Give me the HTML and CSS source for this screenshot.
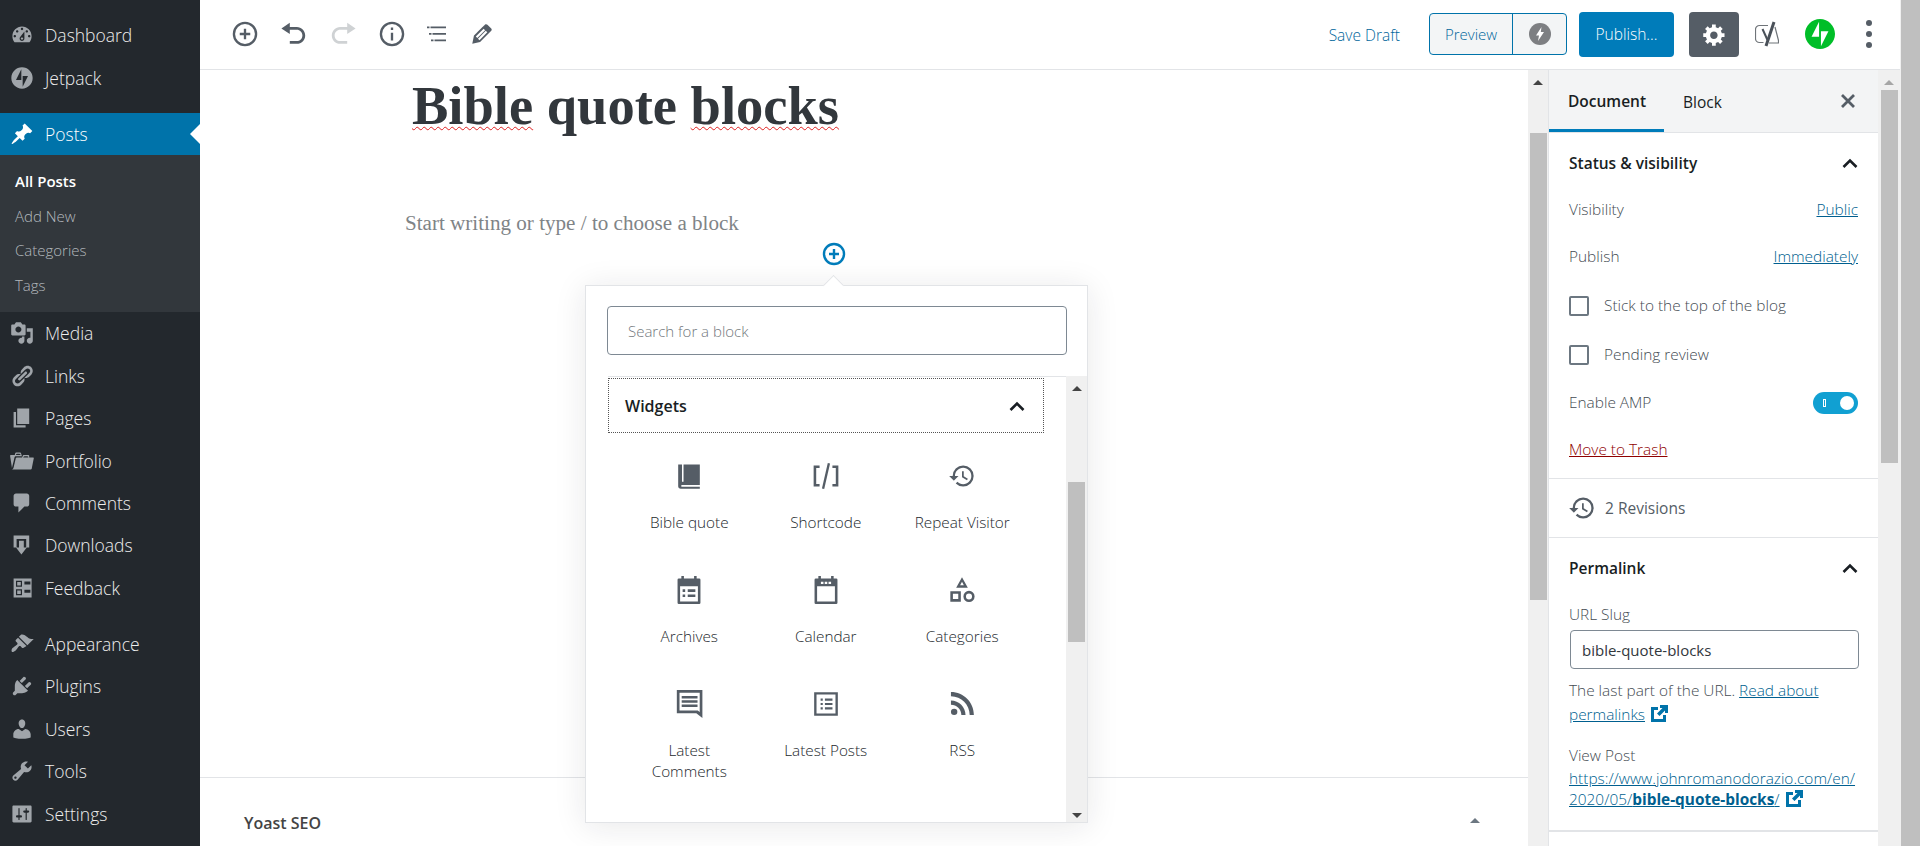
FILE: index.html
```html
<!DOCTYPE html>
<html lang="en">
<head>
    <meta charset="UTF-8">
    <title>Edit Post</title>
    <link rel="stylesheet" href="styles.css">
</head>
<body>
<div class="page">
    <nav class="menu">
        <ul class="menu-list">
            <li class="menu-item"><svg class="menu-icon" viewBox="0 0 20 20"><path fill-rule="evenodd" d="M3.76 16h12.48c1.1-1.37 1.76-3.11 1.76-5 0-4.42-3.58-8-8-8s-8 3.58-8 8c0 1.89.66 3.63 1.76 5zM10 4c.55 0 1 .45 1 1s-.45 1-1 1-1-.45-1-1 .45-1 1-1zM6 6c.55 0 1 .45 1 1s-.45 1-1 1-1-.45-1-1 .45-1 1-1zm8 0c.55 0 1 .45 1 1s-.45 1-1 1-1-.45-1-1 .45-1 1-1zm-5.37 5.55L12 7v6c0 1.1-.9 2-2 2s-2-.9-2-2c0-.57.24-1.08.63-1.45zM4 10c.55 0 1 .45 1 1s-.45 1-1 1-1-.45-1-1 .45-1 1-1zm12 0c.55 0 1 .45 1 1s-.45 1-1 1-1-.45-1-1 .45-1 1-1zm-5 3c0-.55-.45-1-1-1s-1 .45-1 1 .45 1 1 1 1-.45 1-1z"/></svg>Dashboard</li>
            <li class="menu-item"><svg class="menu-icon" viewBox="-2 -2 36 36"><path d="M16 0C7.2 0 0 7.2 0 16s7.2 16 16 16 16-7.2 16-16S24.8 0 16 0zM15 19H7l8-16v16zm2 10V13h8l-8 16z"/></svg>Jetpack</li>
            <li class="menu-sep"></li>
            <li class="menu-item menu-item-active"><svg class="menu-icon" viewBox="0 0 20 20"><path d="M10.44 3.02l1.82-1.82 6.36 6.35-1.83 1.82c-1.05-.68-2.48-.57-3.41.36l-.75.75c-.92.93-1.04 2.35-.35 3.41l-1.83 1.82-2.41-2.41-2.8 2.79c-.42.42-3.38 2.71-3.8 2.29s1.86-3.39 2.28-3.81l2.79-2.79L4.1 9.36l1.83-1.82c1.05.69 2.48.57 3.4-.36l.75-.75c.93-.92 1.05-2.35.36-3.41z"/></svg>Posts</li>
            <li class="submenu">
                <div class="submenu-item submenu-current">All Posts</div>
                <div class="submenu-item">Add New</div>
                <div class="submenu-item">Categories</div>
                <div class="submenu-item">Tags</div>
            </li>
            <li class="menu-item"><svg class="menu-icon" viewBox="0 0 20 20"><path d="M13 11V4c0-.55-.45-1-1-1h-1.67L9 1H5L3.67 3H2c-.55 0-1 .45-1 1v7c0 .55.45 1 1 1h10c.55 0 1-.45 1-1zM7 4.5c1.38 0 2.5 1.12 2.5 2.5S8.38 9.5 7 9.5 4.5 8.38 4.5 7 5.62 4.5 7 4.5zM14 6h5v10.5c0 1.38-1.12 2.5-2.5 2.5S14 17.88 14 16.5s1.12-2.5 2.5-2.5c.17 0 .34.02.5.05V9h-3V6zm-4 8.05V13h2v3.5c0 1.38-1.12 2.5-2.5 2.5S7 17.88 7 16.5 8.12 14 9.5 14c.17 0 .34.02.5.05z"/></svg>Media</li>
            <li class="menu-item"><svg class="menu-icon" viewBox="0 0 20 20"><path d="M17.74 2.76c1.68 1.69 1.68 4.41 0 6.1l-1.53 1.52c-1.12 1.12-2.7 1.47-4.14 1.09l2.62-2.61.76-.77.76-.76c.84-.84.84-2.2 0-3.04-.84-.85-2.2-.85-3.04 0l-.77.76-3.38 3.38c-.37-1.44-.02-3.02 1.1-4.14l1.52-1.53c1.69-1.68 4.42-1.68 6.1 0zM8.59 13.43l5.34-5.34c.42-.42.42-1.1 0-1.52-.44-.43-1.13-.39-1.53 0l-5.33 5.34c-.42.42-.42 1.1 0 1.52.44.43 1.13.39 1.52 0zm-.76 2.29l4.14-4.15c.38 1.44.03 3.02-1.09 4.14l-1.52 1.53c-1.69 1.68-4.41 1.68-6.1 0-1.68-1.68-1.68-4.42 0-6.1l1.53-1.52c1.12-1.12 2.7-1.47 4.14-1.1l-4.14 4.15c-.85.84-.85 2.2 0 3.05.84.84 2.2.84 3.04 0z"/></svg>Links</li>
            <li class="menu-item"><svg class="menu-icon" viewBox="0 0 20 20"><path d="M6 15V2h10v13H6zm-1 1h8v2H3V5h2v11z"/></svg>Pages</li>
            <li class="menu-item"><svg class="menu-icon" viewBox="0 0 20 20"><path d="M4 5H.78c-.37 0-.74.32-.69.84l1.56 9.99S3.5 8.47 3.86 6.7c.11-.53.61-.7.98-.7H10s-.7-2.08-.77-2.31C9.11 3.25 8.89 3 8.45 3H5.14c-.36 0-.7.23-.8.64C4.25 4.04 4 5 4 5zm4.88 0h-4s.42-1 .87-1h2.13c.48 0 1 1 1 1zM2.67 16.25c-.31.47-.76.75-1.26.75h15.73c.54 0 .92-.31 1.03-.83.44-2.19 1.68-8.44 1.68-8.44.07-.5-.3-.73-.62-.73H16V5.53c0-.16-.26-.53-.66-.53h-3.76c-.52 0-.87.58-.87.58L10 7H5.59c-.32 0-.63.19-.69.5 0 0-1.59 6.7-1.72 7.33-.07.37-.22.99-.51 1.42zM15.38 7H11s.58-1 1.13-1h2.29c.71 0 .96 1 .96 1z"/></svg>Portfolio</li>
            <li class="menu-item"><svg class="menu-icon" viewBox="0 0 20 20"><path d="M5 2h9c1.1 0 2 .9 2 2v7c0 1.1-.9 2-2 2h-2l-5 5v-5H5c-1.1 0-2-.9-2-2V4c0-1.1.9-2 2-2z"/></svg>Comments</li>
            <li class="menu-item"><svg class="menu-icon" viewBox="0 0 20 20"><path d="M3 2h13v10h-2.5V5h-8v7H3zM7.5 6.500h4V12H14l-4.500 6L5 12h2.500z"/></svg>Downloads</li>
            <li class="menu-item"><svg class="menu-icon" viewBox="0 0 20 20"><path fill-rule="evenodd" d="M3 2h15v16H3zM5 4v5h5V4zm0 7v5h5v-5zm1-6h3v3H6zm0 7h3v3H6zm6-7.500V7h5V4.500zm0 7V14h5v-2.500z"/></svg>Feedback</li>
            <li class="menu-sep"></li>
            <li class="menu-item"><svg class="menu-icon" viewBox="0 0 20 20"><path d="M14.48 11.06L7.41 3.99l1.5-1.5c.5-.56 2.3-.47 3.51.32 1.21.8 1.43 1.28 2.91 2.1 1.18.64 2.45 1.26 4.45.85zm-.71.71L6.7 4.7 4.93 6.47c-.39.39-.39 1.02 0 1.41l1.06 1.06c.39.39.39 1.03 0 1.42-.6.6-1.43 1.11-2.21 1.69-.35.26-.7.53-1.01.84C1.43 13.71.96 15.1 1.5 16.5c.54.54 1.92.08 3.44-1.31.31-.31.58-.66.84-1.01.58-.78 1.09-1.61 1.69-2.21.39-.39 1.03-.39 1.42 0l1.06 1.06c.39.39 1.02.39 1.41 0z"/></svg>Appearance</li>
            <li class="menu-item"><svg class="menu-icon" viewBox="0 0 20 20"><path d="M13.11 4.36L9.87 7.6 8 5.73l3.24-3.24c.35-.34 1.05-.2 1.56.32.52.51.66 1.21.31 1.55zm-8 1.77l.91-1.12 9.01 9.01-1.19.84c-.71.71-2.63 1.16-3.82 1.16H6.14L4.9 17.26c-.59.59-1.54.59-2.12 0-.59-.58-.59-1.53 0-2.12l1.24-1.24v-3.88c0-1.13.4-3.19 1.09-3.89zm7.26 3.97l3.24-3.24c.34-.35 1.04-.21 1.55.31.52.51.66 1.21.31 1.55l-3.24 3.25z"/></svg>Plugins</li>
            <li class="menu-item"><svg class="menu-icon" viewBox="0 0 20 20"><path d="M10 9.250c-2.270 0-2.730-3.440-2.730-3.440C7 4.020 7.820 2 9.970 2c2.160 0 2.980 2.020 2.710 3.810 0 0-.41 3.440-2.680 3.440zm0 2.570L12.720 10c2.390 0 4.520 2.330 4.520 4.530v2.490s-3.650 1.130-7.240 1.130c-3.650 0-7.240-1.130-7.240-1.130v-2.490c0-2.250 1.940-4.480 4.470-4.480z"/></svg>Users</li>
            <li class="menu-item"><svg class="menu-icon" viewBox="0 0 20 20"><path d="M16.68 9.770c-1.340 1.340-3.300 1.670-4.950.99l-5.410 6.520c-.99.99-2.590.99-3.580 0s-.99-2.590 0-3.570l6.520-5.420c-.68-1.650-.35-3.610.99-4.950 1.280-1.280 3.120-1.620 4.720-1.060l-2.890 2.890 2.820 2.820 2.860-2.870c.53 1.580.18 3.390-1.080 4.650zM3.810 16.210c.4.39 1.040.39 1.430 0 .4-.4.4-1.040 0-1.430-.39-.4-1.030-.4-1.430 0-.39.39-.39 1.030 0 1.430z"/></svg>Tools</li>
            <li class="menu-item"><svg class="menu-icon" viewBox="0 0 20 20"><path d="M18 16V4c0-.55-.45-1-1-1H3c-.55 0-1 .45-1 1v12c0 .55.45 1 1 1h14c.55 0 1-.45 1-1zM8 11h1c.55 0 1 .45 1 1s-.45 1-1 1H8v1.500c0 .28-.22.5-.5.5s-.5-.22-.5-.5V13H6c-.55 0-1-.45-1-1s.45-1 1-1h1V5.500c0-.28.22-.5.5-.5s.5.22.5.5V11zm5-2h-1c-.55 0-1-.45-1-1s.45-1 1-1h1V5.500c0-.28.22-.5.5-.5s.5.22.5.5V7h1c.55 0 1 .45 1 1s-.45 1-1 1h-1v5.500c0 .28-.22.5-.5.5s-.5-.22-.5-.5V9z"/></svg>Settings</li>
        </ul>
    </nav>

    <div class="main">
        <header class="topbar">
            <div class="tools">
                <svg class="tool" viewBox="0 0 24 24"><circle cx="12" cy="12" r="9.500" class="line"/><path d="M12 7.500v9M7.500 12h9" class="line"/></svg>
                <svg class="tool" viewBox="0 0 20 20"><path d="M12 5H7V2L1 6l6 4V7h5c2.200 0 4 1.800 4 4s-1.800 4-4 4H7v2h5c3.300 0 6-2.700 6-6s-2.700-6-6-6z"/></svg>
                <svg class="tool tool-off" viewBox="0 0 20 20"><path d="M8 5h5V2l6 4-6 4V7H8c-2.200 0-4 1.800-4 4s1.800 4 4 4h5v2H8c-3.300 0-6-2.700-6-6s2.700-6 6-6z"/></svg>
                <svg class="tool" viewBox="0 0 24 24"><circle cx="12" cy="12" r="9.500" class="line"/><path d="M11 11h2v6.500h-2zM11 6.500h2v2h-2z"/></svg>
                <svg class="tool tool-tight" viewBox="-2 -2 28 28"><path d="M2 4.500h2.500V6.200H2zM5.500 4.500H21V6.200H5.500zM4 11h2.500v1.700H4zM7.500 11H21v1.700H7.500zM6 17.500h2.500v1.700H6zM9.500 17.500H21v1.700H9.500z"/></svg>
                <svg class="tool tool-tight" viewBox="0 0 20 20"><path d="M13.890 3.390l2.710 2.700c.46.46.42 1.240.03 1.640l-8.010 8.020-5.560 1.160 1.160-5.580s7.600-7.630 7.990-8.030c.39-.39 1.220-.39 1.680.09zm-2.730 2.790l-5.590 5.610 1.110 1.110 5.540-5.650zm-2.970 8.230l5.580-5.600-1.070-1.080-5.590 5.600z"/></svg>
            </div>
            <div class="actions">
                <a class="save-draft">Save Draft</a>
                <div class="preview-group">
                    <span class="preview-label">Preview</span>
                    <span class="preview-amp"><svg viewBox="0 0 24 24" width="24" height="24"><circle cx="12" cy="12" r="11" fill="#7d7f82"/><path d="M13.500 5L8 13.500h3L10 19l6-9h-3.200z" fill="#fff"/></svg></span>
                </div>
                <button class="publish">Publish...</button>
                <span class="settings-btn"><svg viewBox="0 0 20 20" width="25" height="25"><path d="M18 12h-2.180c-.17.7-.44 1.350-.81 1.930l1.540 1.540-2.100 2.100-1.540-1.540c-.58.36-1.230.63-1.910.79V19H8v-2.180c-.68-.16-1.330-.43-1.910-.79l-1.540 1.540-2.120-2.120 1.540-1.540c-.36-.58-.63-1.230-.79-1.910H1V9.030h2.170c.16-.7.44-1.350.8-1.940L2.430 5.550l2.100-2.100 1.540 1.540c.58-.37 1.240-.64 1.930-.81V2h3v2.180c.68.16 1.330.43 1.910.79l1.540-1.540 2.120 2.120-1.540 1.540c.36.59.64 1.240.8 1.940H18V12zm-8.500 1.500c1.660 0 3-1.340 3-3s-1.340-3-3-3-3 1.340-3 3 1.340 3 3 3z" fill="#fff"/></svg></span>
                <svg class="yoast" viewBox="0 0 24 26" width="24" height="26"><path d="M13 4.500H4.500a4 4 0 0 0-4 4v9a4 4 0 0 0 4 4h4M20 6l3.500 13.500v2.500H14" fill="none" stroke="#6f7479" stroke-width="1.200"/><path d="M7.500 8l5 11" fill="none" stroke="#4a5159" stroke-width="2"/><path d="M19 1l-8 24" fill="none" stroke="#4a5159" stroke-width="3"/></svg>
                <svg class="jetpack" viewBox="0 0 32 32" width="30" height="30"><path d="M16 0C7.200 0 0 7.200 0 16s7.200 16 16 16 16-7.200 16-16S24.800 0 16 0zM15 19H7l8-16v16zm2 10V13h8l-8 16z" fill="#00be28"/></svg>
                <span class="more"><i></i><i></i><i></i></span>
            </div>
        </header>

        <div class="workspace">
            <section class="editor">
                <div class="editor-body">
                    <h1 class="post-title"><span class="misspelt">Bible</span> quote <span class="misspelt">blocks</span></h1>
                    <p class="post-placeholder">Start writing or type / to choose a block</p>
                    <svg class="block-plus" viewBox="0 0 24 24" width="24" height="24"><circle cx="12" cy="12" r="10" fill="none" stroke="#007cba" stroke-width="2.400"/><path d="M12 7v10M7 12h10" fill="none" stroke="#007cba" stroke-width="2.400"/></svg>
                    <div class="meta-box">
                        <span>Yoast SEO</span>
                        <i class="arrow-up arrow-meta"></i>
                    </div>

                    <div class="inserter">
                        <span class="inserter-tip"></span>
                        <div class="inserter-search">Search for a block</div>
                        <div class="inserter-body">
                            <div class="inserter-list">
                                <div class="inserter-head">
                                    <span>Widgets</span>
                                    <svg class="chevron" viewBox="0 0 24 24"><path d="M5.500 16l6.500-6.500 6.500 6.500" fill="none" stroke="#191e23" stroke-width="2.600"/></svg>
                                </div>
                                <div class="block-grid">
                                    <div class="block-item">
                                        <svg viewBox="1.500 1 22 22"><path d="M4 3h17v16H6.500v1.500H21V22H6c-1.200 0-2-.9-2-2zM7 3v13.500h1.200V3z" fill-rule="evenodd"/></svg>
                                        <span>Bible quote</span>
                                    </div>
                                    <div class="block-item">
                                        <svg viewBox="0 0 24 24"><path d="M6.500 4H2.500v16h4M17.500 4h4v16h-4" fill="none" stroke="#555d66" stroke-width="2.200"/><path d="M14.500 1L9.500 23" fill="none" stroke="#555d66" stroke-width="2"/></svg>
                                        <span>Shortcode</span>
                                    </div>
                                    <div class="block-item">
                                        <svg viewBox="0 0 24 24"><path d="M13 3a9 9 0 0 0-9 9H1l3.890 3.890.07.14L9 12H6c0-3.870 3.130-7 7-7s7 3.130 7 7-3.130 7-7 7c-1.930 0-3.680-.79-4.940-2.060l-1.420 1.420A8.954 8.954 0 0 0 13 21a9 9 0 0 0 0-18zm-1 5v5l4.280 2.540.72-1.210-3.500-2.080V8H12z"/></svg>
                                        <span>Repeat Visitor</span>
                                    </div>
                                    <div class="block-item">
                                        <svg viewBox="2 1 20 22"><path fill-rule="evenodd" d="M6 1h2v2h8V1h2v2h2a1 1 0 0 1 1 1v18a1 1 0 0 1-1 1H4a1 1 0 0 1-1-1V4a1 1 0 0 1 1-1h2zM5 9v12h14V9zM7 11.500h2v2H7zm4 0h6v2h-6zm-4 4h2v2H7zm4 0h6v2h-6z"/></svg>
                                        <span>Archives</span>
                                    </div>
                                    <div class="block-item">
                                        <svg viewBox="2 1 20 22"><path fill-rule="evenodd" d="M6 1h2v2h8V1h2v2h2a1 1 0 0 1 1 1v18a1 1 0 0 1-1 1H4a1 1 0 0 1-1-1V4a1 1 0 0 1 1-1h2zM5 9v12h14V9zM8 5.500h2v1.700H8zm3 0h2v1.700h-2zm3 0h2v1.700h-2z"/></svg>
                                        <span>Calendar</span>
                                    </div>
                                    <div class="block-item">
                                        <svg viewBox="0 0 24 24"><path fill-rule="evenodd" d="M12 1l5 9H7zm0 4L10.400 8h3.200zM2 13h9v9H2zm2.200 2.200v4.600h4.600v-4.600z"/><circle cx="18" cy="17.500" r="3.700" fill="none" stroke="#555d66" stroke-width="2.200"/></svg>
                                        <span>Categories</span>
                                    </div>
                                    <div class="block-item">
                                        <svg viewBox="1 1 22 23"><path fill-rule="evenodd" d="M2 1h21v23l-5-4H2zM4.200 3.200v14.600h15l1.600 1.200V3.200zM6 6h13v2H6zm0 3.500h13v2H6zm0 3.500h13v2H6z"/></svg>
                                        <span>Latest Comments</span>
                                    </div>
                                    <div class="block-item">
                                        <svg viewBox="-1 -1 26 26"><path fill-rule="evenodd" d="M1 1h22v22H1zm2.200 2.200v17.600h17.600V3.200zM7 7h2v2H7zm4 0h7v2h-7zm-4 4h2v2H7zm4 0h7v2h-7zm-4 4h2v2H7zm4 0h7v2h-7z"/></svg>
                                        <span>Latest Posts</span>
                                    </div>
                                    <div class="block-item">
                                        <svg viewBox="2 3 19 19"><path d="M6.180 15.640a2.180 2.180 0 1 1 0 4.360 2.180 2.180 0 0 1 0-4.360zM4 4.440v2.830c7.030 0 12.730 5.700 12.730 12.730h2.830c0-8.590-6.970-15.560-15.560-15.560zm0 5.660v2.830c3.900 0 7.070 3.170 7.070 7.070h2.830c0-5.470-4.430-9.900-9.900-9.900z"/></svg>
                                        <span>RSS</span>
                                    </div>
                                </div>
                            </div>
                            <div class="scroll scroll-inserter">
                                <div class="scroll-btn"><i class="arrow-up"></i></div>
                                <div class="scroll-thumb"></div>
                                <div class="scroll-btn scroll-btn-down"><i class="arrow-down"></i></div>
                            </div>
                        </div>
                    </div>
                </div>
                <div class="scroll scroll-editor">
                    <div class="scroll-btn"><i class="arrow-up"></i></div>
                    <div class="scroll-thumb"></div>
                </div>
            </section>

            <aside class="sidebar">
                <div class="tabs">
                    <span class="tab tab-active">Document</span>
                    <span class="tab">Block</span>
                    <svg class="tabs-close" viewBox="0 0 24 24"><path d="M6 6l12 12M18 6L6 18" fill="none" stroke="#555d66" stroke-width="2.800"/></svg>
                </div>

                <section class="panel panel-status">
                    <div class="panel-title">
                        <span>Status &amp; visibility</span>
                        <svg class="chevron" viewBox="0 0 24 24"><path d="M5.500 16l6.500-6.500 6.500 6.500" fill="none" stroke="#191e23" stroke-width="2.600"/></svg>
                    </div>
                    <div class="row"><span>Visibility</span><a class="link">Public</a></div>
                    <div class="row"><span>Publish</span><a class="link">Immediately</a></div>
                    <div class="row row-check row-check-first"><i class="checkbox"></i><span>Stick to the top of the blog</span></div>
                    <div class="row row-check"><i class="checkbox"></i><span>Pending review</span></div>
                    <div class="row"><span>Enable AMP</span><span class="toggle"><i class="toggle-bar"></i><i class="toggle-knob"></i></span></div>
                    <div class="row"><a class="link-trash">Move to Trash</a></div>
                </section>

                <section class="panel panel-revisions">
                    <svg viewBox="0 0 24 24" width="28" height="28"><path d="M13 3a9 9 0 0 0-9 9H1l3.890 3.890.07.14L9 12H6c0-3.870 3.130-7 7-7s7 3.130 7 7-3.130 7-7 7c-1.930 0-3.680-.79-4.940-2.060l-1.420 1.420A8.954 8.954 0 0 0 13 21a9 9 0 0 0 0-18zm-1 5v5l4.280 2.540.72-1.210-3.500-2.080V8H12z" fill="#555d66"/></svg>
                    <span>2 Revisions</span>
                </section>

                <section class="panel panel-permalink">
                    <div class="panel-title panel-title-link">
                        <span>Permalink</span>
                        <svg class="chevron" viewBox="0 0 24 24"><path d="M5.500 16l6.500-6.500 6.500 6.500" fill="none" stroke="#191e23" stroke-width="2.600"/></svg>
                    </div>
                    <div class="slug-label">URL Slug</div>
                    <div class="slug-input">bible-quote-blocks</div>
                    <p class="slug-help">The last part of the URL. <a class="link">Read about</a><br><a class="link">permalinks</a> <svg class="ext" viewBox="0 0 20 20"><path fill-rule="evenodd" d="M9 3H2v15h15v-7h-3v4H5V6h4zM11 1v3h2.500L8 9.500l2.500 2.500L16 6.500V9h3V1z"/></svg></p>
                    <div class="view-label">View Post</div>
                    <p class="view-url"><a class="link">https://www.johnromanodorazio.com/en/</a><br><a class="link">2020/05/<b>bible-quote-blocks</b>/</a> <svg class="ext" viewBox="0 0 20 20"><path fill-rule="evenodd" d="M9 3H2v15h15v-7h-3v4H5V6h4zM11 1v3h2.500L8 9.500l2.500 2.500L16 6.500V9h3V1z"/></svg></p>
                </section>
            </aside>

            <div class="scroll scroll-sidebar">
                <div class="scroll-btn"><i class="arrow-up"></i></div>
                <div class="scroll-thumb"></div>
            </div>
        </div>
    </div>

    <div class="scroll-page"></div>
</div>
</body>
</html>
```

FILE: styles.css
```css
* {
    box-sizing: border-box;
}
html, body {
    margin: 0;
    height: 100%;
    overflow: hidden;
}
body {
    font-family: "Open Sans", sans-serif;
    font-weight: 300;
    font-size: 15.4px;
    color: #32373c;
    background: #fff;
}
.page {
    display: flex;
    height: 846px;
}

/* admin menu */
.menu {
    width: 200px;
    flex: none;
    background: #23282d;
}
.menu-list {
    list-style: none;
    margin: 0;
    padding: 14px 0 0;
}
.menu-item {
    position: relative;
    display: flex;
    align-items: center;
    gap: 11px;
    height: 42.4px;
    padding-left: 10px;
    color: #eee;
    font-size: 17.5px;
}
.menu-icon {
    width: 24px;
    height: 24px;
    fill: #a0a5aa;
    flex: none;
}
.menu-item-active {
    background: #0073aa;
    color: #fff;
}
.menu-item-active .menu-icon {
    fill: #fff;
}
.menu-item-active::after {
    content: "";
    position: absolute;
    right: 0;
    top: 11px;
    border: 10px solid transparent;
    border-left: 0;
    border-right-color: #fff;
}
.menu-sep {
    height: 14px;
}
.submenu {
    height: 157px;
    padding-top: 9px;
    background: #32373c;
}
.submenu-item {
    height: 34.5px;
    padding-left: 15px;
    line-height: 34.5px;
    font-size: 15px;
    color: #b4b9be;
}
.submenu-current {
    color: #fff;
    font-weight: 600;
}

/* top bar */
.main {
    flex: 1;
    min-width: 0;
    display: flex;
    flex-direction: column;
}
.topbar {
    height: 70px;
    flex: none;
    display: flex;
    align-items: center;
    justify-content: space-between;
    padding: 0 0 1px 31px;
    border-bottom: 1px solid #e2e4e7;
}
.tools {
    display: flex;
    align-items: center;
    gap: 21px;
}
.tool {
    width: 28px;
    height: 28px;
    fill: #555d66;
}
.tool-off {
    fill: #cfd2d4;
}
.tool-tight {
    margin-left: -4px;
}
.tool .line {
    fill: none;
    stroke: #555d66;
    stroke-width: 2;
}
.actions {
    display: flex;
    align-items: center;
    padding-right: 28px;
}
.save-draft {
    padding-top: 2px;
    color: #00669b;
    font-size: 15.5px;
    margin-right: 29px;
}
.preview-group {
    display: flex;
    width: 138px;
    height: 42px;
    margin-right: 12px;
    border: 1px solid #0073aa;
    border-radius: 4px;
    background: #f3f5f6;
    color: #00669b;
    font-size: 15px;
}
.preview-label {
    width: 83px;
    display: flex;
    align-items: center;
    justify-content: center;
    border-right: 1px solid #0073aa;
}
.preview-amp {
    flex: 1;
    display: flex;
    align-items: center;
    justify-content: center;
}
.publish {
    width: 95px;
    height: 45px;
    margin-right: 15px;
    border: 0;
    border-radius: 4px;
    background: #007cba;
    color: #fff;
    font: 300 15.5px "Open Sans", sans-serif;
}
.settings-btn {
    width: 50px;
    height: 45px;
    margin-right: 16px;
    display: flex;
    align-items: center;
    justify-content: center;
    border-radius: 4px;
    background: #555d66;
}
.yoast {
    margin-right: 26px;
}
.jetpack {
    margin-right: 31px;
}
.more {
    display: flex;
    flex-direction: column;
    gap: 5px;
}
.more i {
    width: 6px;
    height: 6px;
    border-radius: 50%;
    background: #555d66;
}

/* editor */
.workspace {
    flex: 1;
    min-height: 0;
    display: flex;
}
.editor {
    flex: 1;
    min-width: 0;
    display: flex;
}
.editor-body {
    position: relative;
    flex: 1;
    min-width: 0;
    display: flex;
    flex-direction: column;
}
.post-title {
    margin: 11px 0 0 212px;
    line-height: 50px;
    font-family: "Liberation Serif", serif;
    font-size: 54.5px;
    font-weight: 700;
    color: #32373c;
}
.misspelt {
    text-decoration: underline wavy #e02020 1px;
    text-underline-offset: 2px;
}
.post-placeholder {
    margin: 77px 0 0 205px;
    line-height: 30px;
    font-family: "Liberation Serif", serif;
    font-size: 21.1px;
    font-weight: 400;
    color: #7f8487;
}
.block-plus {
    margin: 4px 0 0 622px;
}
.meta-box {
    margin-top: auto;
    height: 69px;
    display: flex;
    align-items: center;
    justify-content: space-between;
    padding: 22px 48px 0 44px;
    border-top: 1px solid #e2e4e7;
    font-size: 16px;
    font-weight: 600;
    color: #444;
}

/* block inserter popover */
.inserter {
    position: absolute;
    left: 385px;
    top: 215px;
    width: 503px;
    height: 538px;
    display: flex;
    flex-direction: column;
    background: #fff;
    border: 1px solid #e2e4e7;
    box-shadow: 0 3px 30px rgba(25, 30, 35, .1);
}
.inserter-tip {
    position: absolute;
    left: 240px;
    top: -8px;
    width: 15px;
    height: 15px;
    transform: rotate(45deg);
    background: #fff;
    border-left: 1px solid #e2e4e7;
    border-top: 1px solid #e2e4e7;
}
.inserter-search {
    margin: 20px 20px 21px 21px;
    height: 49px;
    flex: none;
    display: flex;
    align-items: center;
    padding-left: 20px;
    border: 1px solid #7e8993;
    border-radius: 4px;
    font-size: 15px;
    color: #72777c;
}
.inserter-body {
    flex: 1;
    min-height: 0;
    display: flex;
}
.inserter-list {
    flex: 1;
    min-width: 0;
    overflow: hidden;
    border-top: 1px solid #e2e4e7;
    margin-left: 22px;
    padding-top: 1px;
}
.inserter-head {
    width: 436px;
    height: 55px;
    display: flex;
    align-items: center;
    justify-content: space-between;
    padding: 0 14px 0 16px;
    border: 1px dotted #555;
    font-size: 16px;
    font-weight: 600;
    color: #191e23;
}
.chevron {
    width: 24px;
    height: 24px;
}
.block-grid {
    display: grid;
    grid-template-columns: repeat(3, 136.500px);
    grid-template-rows: 114px 114px 60px;
    margin: 29px 0 0 13px;
}
.block-item {
    display: flex;
    flex-direction: column;
    align-items: center;
    text-align: center;
    padding: 0 18px;
    font-size: 15.3px;
    line-height: 21px;
    color: #23282d;
}
.block-item svg {
    width: 28px;
    height: 28px;
    flex: none;
    margin-bottom: 22px;
    fill: #555d66;
}

/* scrollbars */
.scroll {
    flex: none;
    display: flex;
    flex-direction: column;
    align-items: center;
    background: #f0f0f0;
}
.scroll-btn {
    height: 24px;
    flex: none;
    display: flex;
    align-items: center;
    justify-content: center;
}
.scroll-btn-down {
    height: 14px;
    margin-top: auto;
}
.scroll-thumb {
    width: 17px;
    background: #bfbfbf;
}
.arrow-up, .arrow-down {
    display: block;
    width: 0;
    height: 0;
    border: 5px solid transparent;
}
.arrow-up {
    border-top: 0;
    border-bottom: 5px solid #444;
}
.arrow-down {
    border-bottom: 0;
    border-top: 5px solid #444;
}
.arrow-meta {
    margin-top: -5px;
    border-bottom-color: #6c7781;
}
.scroll-editor {
    width: 21px;
    border-right: 1px solid #e2e4e7;
}
.scroll-editor .scroll-thumb {
    margin-top: 39px;
    height: 467px;
}
.scroll-inserter {
    width: 21px;
}
.scroll-inserter .scroll-thumb {
    margin-top: 82px;
    height: 160px;
}
.scroll-sidebar {
    width: 22px;
}
.scroll-sidebar .arrow-up {
    border-bottom-color: #a6a6a6;
}
.scroll-sidebar .scroll-thumb {
    margin-top: -4px;
    height: 373px;
}
.scroll-page {
    width: 20px;
    flex: none;
    background: #bfbfbf;
    border-left: 1px solid #f0f0f0;
}

/* settings sidebar */
.sidebar {
    width: 329px;
    flex: none;
    background: #fff;
}
.tabs {
    height: 63px;
    display: flex;
    align-items: center;
    background: #f3f4f5;
    border-bottom: 1px solid #e2e4e7;
}
.tab {
    height: 100%;
    display: flex;
    align-items: center;
    padding: 2px 19px 0;
    font-size: 15.5px;
    font-weight: 400;
    color: #191e23;
}
.tab-active {
    width: 115px;
    font-weight: 600;
    border-bottom: 3px solid #007cba;
}
.tabs-close {
    width: 24px;
    height: 24px;
    margin-left: auto;
    margin-right: 18px;
}
.panel {
    padding: 0 20px 0 20px;
    border-bottom: 1px solid #e2e4e7;
}
.panel-status {
    height: 346px;
    padding-top: 7px;
}
.panel-title {
    height: 46px;
    display: flex;
    align-items: center;
    justify-content: space-between;
    font-size: 15.5px;
    font-weight: 600;
    color: #191e23;
}
.panel-title .chevron {
    margin-right: -4px;
}
.row {
    height: 47px;
    display: flex;
    align-items: center;
    justify-content: space-between;
    color: #444b52;
}
.row-check {
    height: 49px;
    justify-content: flex-start;
    gap: 15px;
}
.row-check-first {
    margin-top: 1px;
}
.checkbox {
    width: 20px;
    height: 20px;
    border: 2px solid #6c7781;
    border-radius: 2px;
}
.link {
    color: #005f8f;
    text-decoration: underline;
}
.link-trash {
    color: #8f0000;
    text-decoration: underline;
}
.toggle {
    position: relative;
    width: 45px;
    height: 22px;
    border-radius: 11px;
    background: #11a0d2;
}
.toggle-bar {
    position: absolute;
    left: 10px;
    top: 7px;
    width: 3px;
    height: 8px;
    border: 1px solid #fff;
}
.toggle-knob {
    position: absolute;
    right: 4px;
    top: 4px;
    width: 14px;
    height: 14px;
    border-radius: 50%;
    background: #fff;
}
.panel-revisions {
    height: 59px;
    display: flex;
    align-items: center;
    gap: 9px;
    padding-left: 19px;
    font-size: 15.5px;
    font-weight: 400;
    color: #555d66;
}
.panel-permalink {
    height: 294px;
    border-bottom-width: 2px;
}
.panel-title-link {
    height: 60px;
}
.slug-label {
    margin-top: 7px;
    line-height: 20px;
    color: #444b52;
}
.slug-input {
    width: 289px;
    height: 39px;
    margin: 5px 0 0 1px;
    display: flex;
    align-items: center;
    padding-left: 11px;
    border: 1px solid #7e8993;
    border-radius: 4px;
    font-size: 15px;
    font-weight: 400;
    color: #32373c;
}
.slug-help {
    margin: 10px 0 0;
    line-height: 24px;
    color: #444b52;
}
.view-label {
    margin-top: 19px;
    line-height: 20px;
    color: #444b52;
}
.view-url {
    margin: 2px 0 0;
    line-height: 21px;
}
.view-url b {
    font-weight: 700;
}
.ext {
    width: 20px;
    height: 20px;
    vertical-align: -4px;
    fill: #0073aa;
}
```
